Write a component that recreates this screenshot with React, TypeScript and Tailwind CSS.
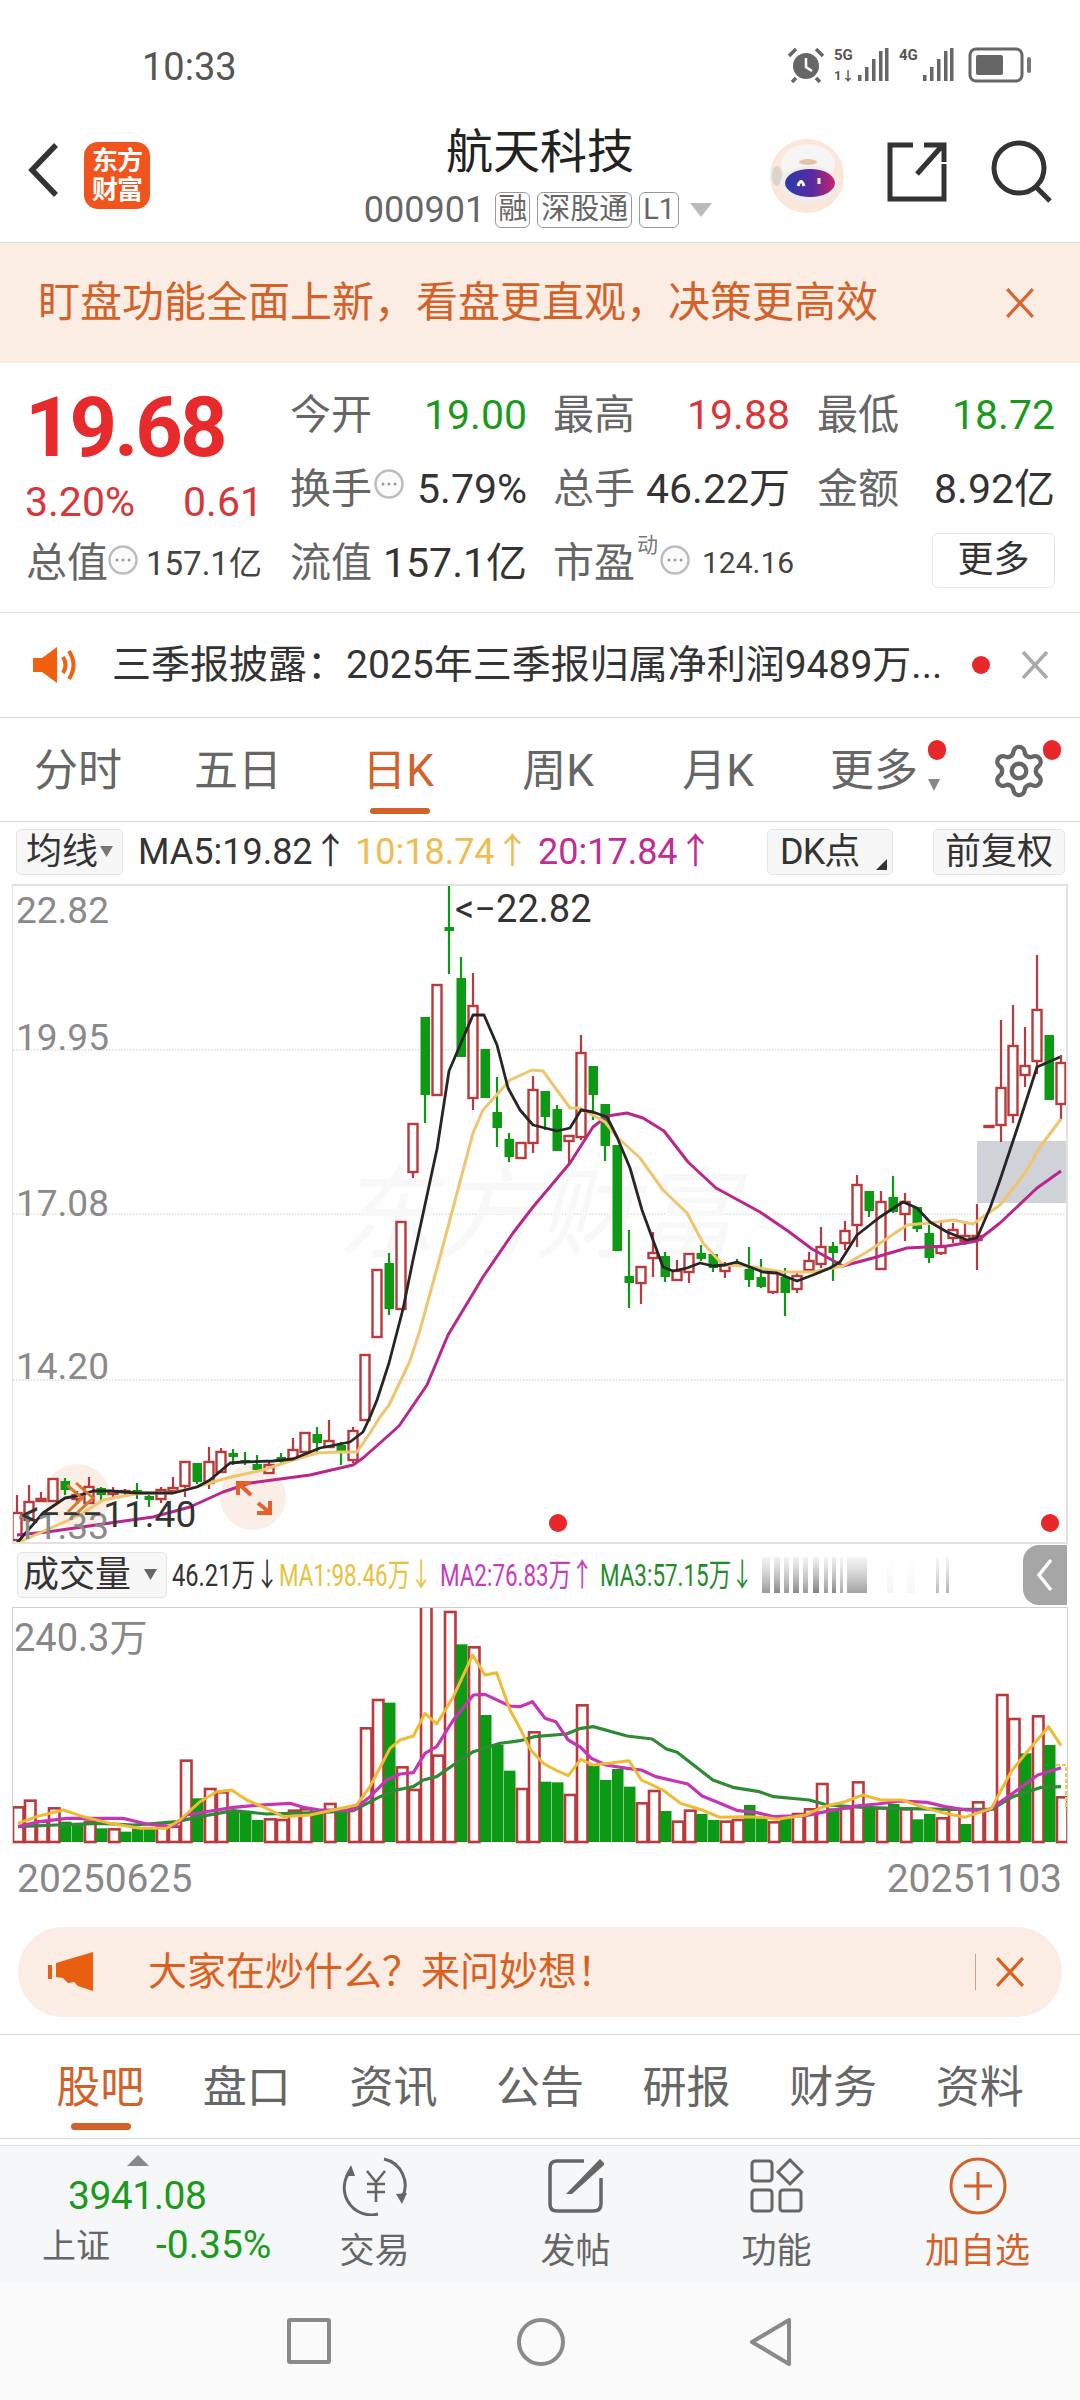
import { Settings } from "lucide-react";

// top, bottom, high, low, r = up / g = down. page pixel coords, x = 17 + 12 * index
const candles: [number, number, number, number, string][] = [
  [1513, 1540, 1495, 1540, "r"], [1502, 1520, 1485, 1522, "r"], [1499, 1501, 1492, 1502, "r"], [1479, 1501, 1479, 1501, "r"],
  [1481, 1490, 1478, 1495, "g"], [1495, 1499, 1491, 1503, "r"], [1487, 1503, 1477, 1503, "r"], [1488, 1495, 1487, 1502, "g"],
  [1491, 1494, 1487, 1498, "r"], [1491, 1492, 1489, 1495, "r"], [1490, 1494, 1483, 1499, "g"], [1496, 1500, 1495, 1507, "g"],
  [1490, 1499, 1487, 1503, "r"], [1488, 1491, 1477, 1492, "r"], [1462, 1486, 1462, 1497, "r"], [1463, 1482, 1463, 1484, "g"],
  [1462, 1483, 1447, 1489, "r"], [1452, 1472, 1448, 1472, "r"], [1453, 1457, 1449, 1465, "g"], [1460, 1461, 1452, 1465, "g"],
  [1464, 1470, 1455, 1470, "g"], [1465, 1473, 1460, 1473, "r"], [1457, 1462, 1453, 1463, "g"], [1450, 1459, 1438, 1460, "r"],
  [1433, 1452, 1433, 1452, "r"], [1434, 1443, 1427, 1453, "g"], [1441, 1447, 1420, 1448, "r"], [1445, 1452, 1442, 1465, "g"],
  [1431, 1460, 1427, 1463, "r"], [1355, 1420, 1355, 1420, "r"], [1270, 1337, 1270, 1337, "r"], [1263, 1309, 1253, 1315, "g"],
  [1222, 1309, 1222, 1309, "r"], [1124, 1172, 1124, 1178, "r"], [1017, 1095, 1017, 1123, "g"], [985, 1095, 985, 1095, "r"],
  [927, 931, 885, 974, "g"], [978, 1057, 957, 1057, "g"], [1006, 1098, 973, 1110, "r"], [1049, 1098, 1049, 1098, "g"],
  [1112, 1128, 1077, 1147, "g"], [1139, 1157, 1133, 1162, "g"], [1143, 1158, 1143, 1158, "r"], [1090, 1143, 1076, 1153, "r"],
  [1091, 1117, 1091, 1130, "g"], [1109, 1151, 1105, 1151, "g"], [1136, 1141, 1136, 1163, "r"], [1053, 1137, 1035, 1140, "r"],
  [1066, 1095, 1066, 1120, "g"], [1104, 1146, 1104, 1161, "g"], [1145, 1251, 1145, 1251, "g"], [1276, 1283, 1230, 1308, "g"],
  [1267, 1283, 1267, 1304, "r"], [1253, 1258, 1232, 1277, "r"], [1256, 1277, 1252, 1282, "g"], [1271, 1280, 1260, 1280, "r"],
  [1254, 1272, 1254, 1283, "r"], [1253, 1259, 1245, 1261, "g"], [1254, 1268, 1254, 1272, "g"], [1265, 1271, 1262, 1278, "r"],
  [1263, 1264, 1259, 1265, "g"], [1269, 1280, 1247, 1287, "g"], [1277, 1287, 1259, 1288, "g"], [1273, 1292, 1273, 1294, "r"],
  [1277, 1293, 1268, 1316, "g"], [1276, 1289, 1273, 1293, "r"], [1261, 1270, 1252, 1273, "r"], [1247, 1264, 1227, 1268, "r"],
  [1246, 1253, 1242, 1281, "g"], [1231, 1243, 1221, 1250, "r"], [1185, 1225, 1175, 1247, "r"], [1191, 1211, 1191, 1217, "g"],
  [1202, 1269, 1191, 1269, "r"], [1197, 1212, 1176, 1213, "g"], [1202, 1214, 1193, 1241, "r"], [1207, 1229, 1207, 1232, "g"],
  [1233, 1258, 1225, 1263, "g"], [1247, 1253, 1220, 1255, "r"], [1230, 1238, 1223, 1243, "r"], [1236, 1241, 1223, 1245, "r"],
  [1236, 1240, 1204, 1270, "r"], [1126, 1126, 1126, 1126, "r"], [1088, 1125, 1020, 1142, "r"], [1046, 1115, 1005, 1123, "r"],
  [1066, 1075, 1027, 1087, "r"], [1010, 1061, 955, 1074, "r"], [1035, 1100, 1035, 1100, "g"], [1063, 1104, 1055, 1119, "r"],
];

const ma5 = "17,1543 43,1513 65,1498 77,1496 93,1491 110,1491 137,1493 173,1493 197,1487 210,1480 230,1463 243,1462 273,1461 293,1459 320,1448 350,1442 363,1432 370,1417 377,1400 389,1363 403,1309 413,1260 423,1214 437,1149 449,1071 473,1015 484,1015 497,1045 508,1088 520,1110 533,1125 557,1131 570,1128 581,1110 593,1112 607,1117 617,1137 630,1168 642,1210 653,1240 663,1267 673,1271 687,1268 700,1263 713,1266 725,1265 737,1262 750,1267 763,1272 777,1273 797,1281 813,1275 830,1268 840,1262 857,1235 880,1217 903,1202 917,1208 930,1222 947,1232 967,1240 977,1238 990,1208 1000,1180 1020,1120 1037,1067 1060,1057";
const ma10 = "17,1543 53,1527 80,1515 103,1500 140,1493 173,1493 203,1485 227,1478 263,1470 293,1460 317,1453 340,1452 357,1452 370,1433 380,1417 389,1405 410,1361 420,1330 440,1257 473,1133 483,1110 510,1080 532,1070 543,1071 570,1108 580,1108 605,1122 617,1137 640,1158 663,1190 687,1213 703,1243 723,1265 747,1266 783,1272 813,1272 843,1266 870,1250 907,1225 930,1223 953,1220 973,1224 1000,1205 1025,1173 1040,1147 1061,1119";
const ma20 = "17,1535 47,1532 110,1523 153,1517 190,1507 223,1492 250,1483 310,1475 353,1465 363,1458 380,1443 399,1426 427,1385 448,1335 483,1277 513,1233 533,1207 570,1163 593,1127 607,1116 627,1113 643,1118 664,1131 688,1162 716,1188 760,1212 788,1231 812,1249 843,1266 873,1258 907,1248 927,1247 947,1246 977,1241 1000,1223 1037,1188 1061,1171";

const volTops = [622, 602, 665, 625, 665, 670, 665, 685, 688, 695, 685, 685, 680, 680, 482, 595, 567, 577, 630, 638, 660, 658, 660, 632, 628, 632, 612, 635, 625, 385, 300, 308, 502, 570, 0, 467, 36, 133, 142, 345, 435, 512, 567, 397, 545, 547, 585, 316, 497, 540, 507, 560, 610, 573, 633, 665, 632, 642, 660, 665, 660, 615, 655, 667, 655, 642, 628, 552, 625, 625, 547, 625, 625, 612, 628, 658, 642, 655, 628, 672, 607, 628, 285, 357, 460, 349, 435, 592];
const volColors = "rrrrggrgrgggrrrgrrgggrrrrgrgrrrgrrrrrgrgggrrggrrggggrrgrrggrrggrgrrrgrrgrgrggrrgrrrrgrgr";

// crop coords: left half is 3x, right half is 2.8x
const volLine = (left: number[][], right: number[][]) =>
  [...left.map(([x, y]) => [x / 3, 1600 + y / 3]), ...right.map(([x, y]) => [520 + x / 2.8, 1600 + y / 3])]
    .map((p) => p.join(","))
    .join(" ");

const vol1 = volLine(
  [[54, 670], [110, 650], [190, 630], [250, 650], [330, 670], [420, 685], [500, 685], [540, 660], [600, 605], [650, 575], [695, 570], [740, 600], [800, 625], [850, 650], [930, 645], [1000, 630], [1070, 615], [1110, 560], [1170, 445], [1200, 420], [1240, 408], [1275, 340], [1310, 372], [1360, 290], [1418, 165], [1455, 225], [1490, 218], [1530, 330]],
  [[0, 385], [30, 450], [65, 490], [100, 510], [135, 527], [170, 478], [205, 495], [250, 490], [305, 482], [340, 540], [400, 570], [450, 610], [510, 630], [560, 652], [620, 650], [680, 652], [720, 658], [800, 645], [850, 620], [910, 605], [960, 585], [1010, 600], [1070, 600], [1130, 622], [1190, 640], [1245, 652], [1320, 625], [1375, 515], [1420, 455], [1480, 380], [1515, 437]]
);
const vol2 = volLine(
  [[54, 680], [120, 665], [200, 655], [370, 655], [440, 672], [520, 680], [560, 645], [650, 630], [700, 622], [780, 615], [870, 610], [910, 622], [960, 630], [1060, 630], [1110, 590], [1160, 540], [1200, 522], [1240, 518], [1275, 460], [1310, 440], [1360, 360], [1420, 285], [1455, 283], [1530, 318]],
  [[0, 320], [35, 305], [70, 355], [100, 365], [135, 420], [170, 442], [200, 475], [240, 495], [300, 505], [340, 510], [380, 530], [470, 552], [510, 588], [560, 610], [610, 632], [660, 637], [710, 650], [800, 647], [870, 632], [940, 618], [1000, 612], [1070, 603], [1140, 607], [1190, 620], [1250, 630], [1310, 632], [1380, 580], [1450, 525], [1515, 503]]
);
const vol3 = volLine(
  [[54, 680], [170, 675], [300, 670], [400, 675], [470, 670], [530, 665], [600, 650], [700, 632], [800, 642], [950, 638], [1060, 632], [1140, 590], [1190, 570], [1240, 560], [1270, 540], [1310, 530], [1360, 495], [1420, 455], [1500, 430]],
  [[0, 422], [40, 410], [130, 402], [170, 385], [205, 380], [300, 408], [370, 417], [410, 447], [440, 457], [540, 540], [600, 563], [670, 575], [710, 590], [810, 600], [860, 615], [960, 622], [1050, 625], [1200, 628], [1320, 628], [1380, 590], [1460, 562], [1515, 560]]
);

const axis = [
  { label: "22.82", y: 923 },
  { label: "19.95", y: 1050 },
  { label: "17.08", y: 1216 },
  { label: "14.20", y: 1379 },
];

const blurBars = [
  [763, 8, 0.6], [775, 6, 0.7], [785, 5, 0.6], [794, 6, 0.7], [804, 5, 0.6], [814, 6, 0.75], [825, 4, 0.6], [833, 4, 0.7], [841, 3, 0.5],
  [848, 20, 0.55], [888, 6, 0.06], [908, 8, 0.05], [937, 3, 0.4], [947, 3, 0.45],
];

const Dots = () => (
  <svg width="30" height="30" viewBox="0 0 30 30" className="shrink-0">
    <circle cx="15" cy="15" r="13.5" fill="#fbfbfb" stroke="#bdbdbd" strokeWidth="2.5" />
    <circle cx="9" cy="15" r="1.5" fill="#999" />
    <circle cx="15" cy="15" r="1.5" fill="#999" />
    <circle cx="21" cy="15" r="1.5" fill="#999" />
  </svg>
);

const CloseX = ({ color, size, width = 3 }: { color: string; size: number; width?: number }) => (
  <svg width={size} height={size} viewBox="0 0 30 30" className="shrink-0">
    <path d="M3 2 L27 28 M27 2 L3 28" stroke={color} strokeWidth={width} fill="none" />
  </svg>
);

const Signal = ({ label, extra }: { label: string; extra?: string }) => (
  <svg width="56" height="36" viewBox="0 0 56 36">
    <text x="0" y="13" className="text-[15px] font-bold" fill="#555">{label}</text>
    {extra && <text x="0" y="33" className="text-[13px] font-bold" fill="#555">{extra}</text>}
    <rect x="24" y="28" width="3.5" height="6" fill="#666" />
    <rect x="31" y="20" width="3.5" height="14" fill="#666" />
    <rect x="38" y="12" width="3.5" height="22" fill="#666" />
    <rect x="45" y="4" width="3.5" height="30" fill="#666" />
    <rect x="51" y="1" width="3.5" height="33" fill="#666" />
  </svg>
);

const StatusBar = () => (
  <div className="h-[110px] flex items-start pt-[47px] pl-[142px] pr-[48px] justify-between">
    <span className="text-[38px] leading-[40px] text-[#555]">10:33</span>
    <div className="flex items-center gap-[9px] -mt-[1px] h-[38px]">
      <svg width="38" height="36" viewBox="0 0 38 36">
        <circle cx="19" cy="19" r="13" fill="#666" />
        <path d="M19 11 V20 L25 24" stroke="#fff" strokeWidth="2.5" fill="none" />
        <path d="M2 9 L9 2 M36 9 L29 2 M9 31 L5 35 M29 31 L33 35" stroke="#666" strokeWidth="3.5" />
      </svg>
      <Signal label="5G" extra="1↓" />
      <Signal label="4G" />
      <svg width="64" height="36" viewBox="0 0 64 36" className="ml-[4px]">
        <rect x="2" y="2" width="52" height="32" rx="6" fill="none" stroke="#666" strokeWidth="3" />
        <rect x="8" y="8" width="27" height="20" rx="2" fill="#666" />
        <rect x="59" y="10" width="4" height="16" rx="2" fill="#777" />
      </svg>
    </div>
  </div>
);

const Header = () => (
  <div className="relative h-[133px] border-b border-[#d9d9d9] flex">
    <div className="flex items-start pl-[26px] pt-[32px] gap-[22px]">
      <svg width="36" height="56" viewBox="0 0 36 56">
        <path d="M30 3 L6 28 L30 53" fill="none" stroke="#333" strokeWidth="5.5" />
      </svg>
      <div className="w-[66px] h-[67px] bg-[#f1541c] rounded-[14px] text-white text-[26px] leading-[29px] font-bold flex flex-col items-center justify-center tracking-[-1px]">
        <span>东方</span>
        <span>财富</span>
      </div>
    </div>
    <div className="absolute left-0 right-0 top-0 flex flex-col items-center">
      <div className="text-[47px] leading-[60px] mt-[12px] text-[#222]">航天科技</div>
      <div className="flex items-center h-[38px] mt-[9px] ml-[-3px] gap-[7px] text-[#666]">
        <span className="text-[36px] leading-none mr-[3px] tracking-[0px]">000901</span>
        <span className="border border-[#999] rounded-[6px] h-[36px] w-[35px] text-[29px] leading-[32px] text-center">融</span>
        <span className="border border-[#999] rounded-[6px] h-[36px] w-[95px] text-[29px] leading-[32px] text-center">深股通</span>
        <span className="border border-[#999] rounded-[6px] h-[36px] w-[40px] text-[29px] leading-[32px] text-center">L1</span>
        <svg width="24" height="16" viewBox="0 0 24 16" className="ml-[3px]">
          <path d="M1 1 H23 L12 15 Z" fill="#bbb" />
        </svg>
      </div>
    </div>
    <div className="ml-auto flex items-start pt-[28px] pr-[26px]">
      <svg width="76" height="76" viewBox="0 0 76 76" className="mr-[42px]">
        <defs>
          <linearGradient id="visor" x1="0" y1="0" x2="1" y2="0">
            <stop offset="0" stopColor="#2b3aa8" />
            <stop offset="0.55" stopColor="#5a2aa0" />
            <stop offset="1" stopColor="#c8256a" />
          </linearGradient>
        </defs>
        <circle cx="38" cy="38" r="37" fill="#fbe6da" />
        <ellipse cx="8" cy="38" rx="5" ry="10" fill="#d9d4d0" />
        <ellipse cx="39" cy="26" rx="27" ry="20" fill="#f6f5f3" />
        <ellipse cx="39" cy="24" rx="9" ry="3" fill="#e6c3a8" />
        <ellipse cx="40" cy="46" rx="29" ry="18" fill="#efedeb" />
        <ellipse cx="41" cy="45" rx="25" ry="14" fill="url(#visor)" />
        <path d="M29 48 Q32 39 35 48 M50 46 V40" stroke="#fff" strokeWidth="3" fill="none" />
      </svg>
      <svg width="60" height="60" viewBox="0 0 60 60" className="mt-[4px] mr-[43px]">
        <path d="M26 3 H3 V57 H57 V22 M30 32 L55 4 M37 3 H57 V20" fill="none" stroke="#333" strokeWidth="5" />
      </svg>
      <svg width="64" height="64" viewBox="0 0 64 64" className="mt-[2px]">
        <circle cx="29" cy="28" r="25" fill="none" stroke="#333" strokeWidth="5" />
        <path d="M46 47 L60 61" stroke="#333" strokeWidth="5" />
      </svg>
    </div>
  </div>
);

const Banner = () => (
  <div className="h-[120px] bg-[#fcede4] flex items-center justify-between pl-[38px] pr-[44px] text-[#d2622a]">
    <span className="text-[42px] leading-none whitespace-nowrap">盯盘功能全面上新，看盘更直观，决策更高效</span>
    <CloseX color="#d9662c" size={32} />
  </div>
);

const Label = ({ children }: { children: string }) => <span className="text-[41px] leading-none text-[#666] w-[82px] shrink-0 whitespace-nowrap">{children}</span>;

const Quote = () => (
  <div className="h-[250px] border-b border-[#dedede] pt-[15px] pl-[28px] grid grid-cols-[262px_263px_264px_238px] grid-rows-[74px_74px_74px]">
    <div className="row-span-2 flex flex-col">
      <div className="text-[83px] leading-[70px] font-bold text-[#e72a2b] tracking-[-3px] mt-[15px] -ml-[3px]">19.68</div>
      <div className="flex justify-between w-[238px] -ml-[3px] mt-[19px] text-[41px] leading-[40px] text-[#d8363a]">
        <span>3.20%</span>
        <span>0.61</span>
      </div>
    </div>
    <div className="flex items-center">
      <Label>今开</Label>
      <span className="ml-auto mr-[26px] text-[41px] leading-none text-[#1a9a1a]">19.00</span>
    </div>
    <div className="flex items-center">
      <Label>最高</Label>
      <span className="ml-auto mr-[27px] text-[41px] leading-none text-[#d8363a]">19.88</span>
    </div>
    <div className="flex items-center">
      <Label>最低</Label>
      <span className="ml-auto text-[41px] leading-none text-[#1a9a1a]">18.72</span>
    </div>

    <div className="flex items-center">
      <Label>换手</Label>
      <span className="-mt-[10px] ml-[2px]"><Dots /></span>
      <span className="ml-auto mr-[26px] text-[41px] leading-none text-[#333]">5.79%</span>
    </div>
    <div className="flex items-center">
      <Label>总手</Label>
      <span className="ml-auto mr-[27px] text-[41px] leading-none text-[#333]">46.22万</span>
    </div>
    <div className="flex items-center">
      <Label>金额</Label>
      <span className="ml-auto text-[41px] leading-none text-[#333]">8.92亿</span>
    </div>

    <div className="flex items-center -ml-[2px]">
      <Label>总值</Label>
      <span className="-mt-[6px]"><Dots /></span>
      <span className="ml-[8px] text-[33px] leading-none text-[#444] whitespace-nowrap">157.1亿</span>
    </div>
    <div className="flex items-center">
      <Label>流值</Label>
      <span className="ml-auto mr-[26px] text-[41px] leading-none text-[#333] whitespace-nowrap">157.1亿</span>
    </div>
    <div className="flex items-center">
      <Label>市盈</Label>
      <span className="text-[21px] leading-none text-[#777] -mt-[36px] ml-[2px]">动</span>
      <span className="-mt-[6px] ml-[2px]"><Dots /></span>
      <span className="ml-[12px] text-[30px] leading-none text-[#444]">124.16</span>
    </div>
    <div className="flex items-center justify-end">
      <span className="w-[123px] h-[55px] -mt-[6px] border border-[#e6e6e6] rounded-[6px] text-[36px] leading-[52px] text-center text-[#333]">更多</span>
    </div>
  </div>
);

const Notice = () => (
  <div className="h-[105px] border-b border-[#dedede] flex items-center pl-[33px] pr-[30px]">
    <svg width="46" height="38" viewBox="0 0 46 38" className="shrink-0">
      <path d="M0 12 H9 L24 1 V37 L9 26 H0 Z" fill="#f0600f" />
      <path d="M30 11 Q35 19 30 27 M36 5 Q45 19 36 33" fill="none" stroke="#f0600f" strokeWidth="4" />
    </svg>
    <span className="ml-[33px] text-[39px] leading-none text-[#333] whitespace-nowrap">三季报披露：2025年三季报归属净利润9489万...</span>
    <span className="ml-auto w-[18px] h-[18px] rounded-full bg-[#e8272a]" />
    <span className="ml-[30px]"><CloseX color="#aaa" size={30} width={3.5} /></span>
  </div>
);

const ChartTabs = () => (
  <div className="h-[104px] border-b border-[#dedede] flex -ml-[2px] text-[44px] leading-none text-[#666] pt-[2px]">
    <span className="w-[160px] flex items-center justify-center">分时</span>
    <span className="w-[160px] flex items-center justify-center">五日</span>
    <span className="relative w-[160px] flex items-center justify-center text-[#d2622a]">
      日K
      <span className="absolute left-[52px] bottom-[7px] w-[60px] h-[6px] rounded-full bg-[#d2622a]" />
    </span>
    <span className="w-[160px] flex items-center justify-center">周K</span>
    <span className="w-[160px] flex items-center justify-center">月K</span>
    <span className="relative w-[160px] flex items-center justify-center -ml-[4px]">
      更多
      <svg width="14" height="14" viewBox="0 0 14 14" className="absolute left-[133px] top-[58px]">
        <path d="M1 1 H13 L7 13 Z" fill="#888" />
      </svg>
      <span className="absolute left-[134px] top-[20px] w-[18px] h-[20px] rounded-full bg-[#e8272a]" />
    </span>
    <span className="relative w-[120px] flex items-center justify-start pl-[36px]">
      <Settings size={58} strokeWidth={1.8} color="#666" />
      <span className="absolute left-[89px] top-[20px] w-[18px] h-[20px] rounded-full bg-[#e8272a]" />
    </span>
  </div>
);

const MaRow = () => (
  <div className="h-[62px] flex items-center pl-[16px] text-[36px] leading-none pb-[2px]">
    <span className="relative w-[107px] h-[46px] bg-[#f7f7f7] border border-[#e4e4e4] rounded-[5px] pl-[9px] flex items-center text-[#333]">
      均线
      <svg width="13" height="13" viewBox="0 0 13 13" className="absolute right-[9px] top-[15px]">
        <path d="M0 1 H13 L6.5 12 Z" fill="#777" />
      </svg>
    </span>
    <span className="ml-[15px] w-[217px] text-[#333] whitespace-nowrap">MA5:19.82↑</span>
    <span className="w-[183px] text-[#f0bb52] whitespace-nowrap">10:18.74↑</span>
    <span className="w-[229px] text-[#c02c94] whitespace-nowrap">20:17.84↑</span>
    <span className="relative w-[126px] h-[46px] bg-[#f7f7f7] border border-[#e4e4e4] rounded-[5px] pl-[12px] flex items-center text-[#333] tracking-[-1px]">
      DK点
      <svg width="11" height="11" viewBox="0 0 11 11" className="absolute right-[5px] bottom-[4px]">
        <path d="M11 0 V11 H0 Z" fill="#333" />
      </svg>
    </span>
    <span className="ml-[40px] w-[132px] h-[46px] bg-[#f7f7f7] border border-[#e4e4e4] rounded-[5px] flex items-center justify-center text-[#333]">前复权</span>
  </div>
);

const PriceChart = () => (
  <div className="ml-[12px] w-[1056px] h-[660px] border border-t-2 border-r-2 border-b-2 border-[#e2e2e2] overflow-hidden">
    <svg width="1053" height="656" viewBox="13 886 1053 656" className="block">
      <rect x="977" y="1141" width="90" height="62" fill="#cfd3d8" />
      {[1050, 1214, 1380].map((y) => (
        <line key={y} x1="13" x2="1066" y1={y} y2={y} stroke="#c9c9c9" strokeDasharray="1.5 1.5" />
      ))}
      <text x="336" y="1250" className="text-[100px] italic" fill="#f8f8f8">东方财富</text>
      {axis.map((a) => (
        <text key={a.label} x="16" y={a.y} className="text-[37px]" fill="#8a8a8a">{a.label}</text>
      ))}
      <circle cx="77" cy="1497" r="33" fill="#fbeee6" />
      <circle cx="253" cy="1497" r="33" fill="#fbeee6" />
      {candles.map(([top, bot, hi, lo, c], i) => {
        const x = 17 + 12 * i;
        const color = c === "r" ? "#b9393d" : "#0c9a14";
        return (
          <g key={i}>
            <line x1={x} x2={x} y1={hi} y2={lo} stroke={color} strokeWidth="2.2" />
            {c === "r" ? (
              <rect x={x - 4.5} y={top} width="9" height={Math.max(bot - top, 1)} fill="#fff" stroke={color} strokeWidth="2.4" />
            ) : (
              <rect x={x - 4.5} y={top} width="9.5" height={Math.max(bot - top, 2)} fill={color} />
            )}
          </g>
        );
      })}
      <polyline points={ma20} fill="none" stroke="#b9278d" strokeWidth="3" strokeLinejoin="round" />
      <polyline points={ma10} fill="none" stroke="#efc56f" strokeWidth="3" strokeLinejoin="round" />
      <polyline points={ma5} fill="none" stroke="#262626" strokeWidth="2.8" strokeLinejoin="round" />
      <text x="455" y="922" className="text-[38px]" fill="#333">{"<\u221222.82"}</text>
      <text x="16" y="1539" className="text-[37px]" fill="#8a8a8a">11.33</text>
      <text x="21" y="1527" className="text-[37px]" fill="#333">{"<\u2212\u2212\u221211.40"}</text>
      <path d="M67 1485 L82 1498 L68 1512 M76 1483 L93 1498 L77 1513" fill="none" stroke="#d97a2b" strokeWidth="3" />
      <path d="M238 1495 V1483 H251 M239 1484 L251 1495 M257 1513 H270 V1501 M258 1503 L269 1512" fill="none" stroke="#e5602a" strokeWidth="4" />
      <ellipse cx="558" cy="1523" rx="9" ry="9" fill="#e8272a" />
      <ellipse cx="1050" cy="1523" rx="9" ry="9" fill="#e8272a" />
    </svg>
  </div>
);

const VolumeHeader = () => (
  <div className="relative h-[63px] flex items-center pl-[17px] pb-[2px]">
    <span className="relative w-[150px] h-[46px] bg-[#f7f7f7] border border-[#e4e4e4] rounded-[5px] pl-[5px] flex items-center text-[36px] leading-none text-[#333]">
      成交量
      <svg width="13" height="13" viewBox="0 0 13 13" className="absolute right-[9px] top-[15px]">
        <path d="M0 1 H13 L6.5 12 Z" fill="#666" />
      </svg>
    </span>
    <div className="flex text-[32px] leading-none whitespace-nowrap">
      <span className="w-[107px] ml-[5px] text-[#333] origin-left scale-x-[0.74]">46.21万↓</span>
      <span className="w-[161px] text-[#e6c23e] origin-left scale-x-[0.7]">MA1:98.46万↓</span>
      <span className="w-[160px] text-[#c63cc0] origin-left scale-x-[0.7]">MA2:76.83万↑</span>
      <span className="w-[160px] text-[#1f8c2a] origin-left scale-x-[0.7]">MA3:57.15万↓</span>
    </div>
    <svg width="210" height="40" viewBox="760 0 210 40" className="-ml-[1px]">
      <defs>
        <linearGradient id="blur" x1="0" y1="0" x2="0" y2="1">
          <stop offset="0" stopColor="#888" stopOpacity="0.15" />
          <stop offset="1" stopColor="#555" stopOpacity="1" />
        </linearGradient>
      </defs>
      {blurBars.map(([x, w, o]) => (
        <rect key={x} x={x} y="2" width={w} height="36" fill="url(#blur)" opacity={o} />
      ))}
    </svg>
    <span className="absolute right-[13px] top-[1px] w-[44px] h-[60px] rounded-l-[16px] bg-[#a6a6a6] flex items-center justify-center">
      <svg width="18" height="34" viewBox="0 0 18 34">
        <path d="M15 2 L3 17 L15 32" fill="none" stroke="#fff" strokeWidth="3.5" />
      </svg>
    </span>
  </div>
);

const VolumeChart = () => (
  <div className="ml-[12px] w-[1056px] h-[237px] border border-[#cfcfcf] border-b-0 overflow-hidden relative">
    <svg width="1054" height="236" viewBox="13 1608 1054 236" className="block">
      {volTops.map((t, i) => {
        const x = 18 + 12 * i;
        const top = 1600 + t / 3;
        if (volColors[i] === "r") {
          return <rect key={i} x={x - 5} y={top} width="10.5" height={1842 - top} fill="#fff" stroke="#b9393d" strokeWidth="2.6" />;
        }
        return <rect key={i} x={x - 6} y={top} width="11.5" height={1842 - top} fill="#0c9a14" />;
      })}
      <path d="M1056 1765 H1066 V1810" fill="none" stroke="#eac94a" strokeWidth="2" strokeDasharray="4 2" />
      <polyline points={vol3} fill="none" stroke="#2f8a35" strokeWidth="3.2" strokeLinejoin="round" />
      <polyline points={vol2} fill="none" stroke="#c535b5" strokeWidth="3.2" strokeLinejoin="round" />
      <polyline points={vol1} fill="none" stroke="#eebb33" strokeWidth="3" strokeLinejoin="round" />
      <text x="14" y="1651" className="text-[38px]" fill="#888">240.3万</text>
    </svg>
  </div>
);

const Dates = () => (
  <div className="h-[83px] flex items-center justify-between pl-[17px] pr-[18px] pb-[13px] text-[39px] leading-none text-[#888]">
    <span>20250625</span>
    <span>20251103</span>
  </div>
);

const AskPill = () => (
  <div className="h-[90px] mx-[18px] rounded-[45px] bg-[#fcede4] flex items-center pl-[30px] pr-[36px]">
    <svg width="46" height="40" viewBox="0 0 46 40" className="shrink-0">
      <rect x="0" y="13" width="4" height="14" fill="#e8600f" />
      <path d="M8 11 L45 0 V39 L30 34 L26 30 L20 31 L15 26 L8 25 Z" fill="#e8600f" />
    </svg>
    <span className="ml-[54px] text-[39px] leading-none text-[#d9601f] whitespace-nowrap">大家在炒什么？来问妙想！</span>
    <span className="ml-auto w-[1px] h-[36px] bg-[#c9a590] mr-[18px]" />
    <CloseX color="#d9601f" size={32} />
  </div>
);

const bottomTabs = ["股吧", "盘口", "资讯", "公告", "研报", "财务", "资料"];

const InfoTabs = () => (
  <div className="mt-[17px] h-[105px] border-y border-[#dedede] grid grid-cols-7 px-[27px] text-[44px] leading-none text-[#666] pt-[3px]">
    {bottomTabs.map((t, i) => (
      <span key={t} className={i === 0 ? "relative flex items-center justify-center text-[#d2622a]" : "flex items-center justify-center"}>
        {t}
        {i === 0 && <span className="absolute left-[44px] bottom-[8px] w-[60px] h-[7px] rounded-full bg-[#d2622a]" />}
      </span>
    ))}
  </div>
);

const ToolItem = ({ label, color, children }: { label: string; color: string; children: React.ReactNode }) => (
  <div className="flex flex-col items-center pt-[10px]">
    <div className="h-[60px] flex items-center">{children}</div>
    <span className={`mt-[18px] text-[35px] leading-none whitespace-nowrap ${color}`}>{label}</span>
  </div>
);

const Toolbar = () => (
  <div className="mt-[6px] h-[137px] border-t border-[#dedede] bg-[#f6f7f9] grid grid-cols-[274px_repeat(4,201px)]">
    <div className="relative pl-[42px]">
      <svg width="22" height="12" viewBox="0 0 22 12" className="absolute left-[127px] top-[8px]">
        <path d="M0 12 L11 1 L22 12 Z" fill="#888" />
      </svg>
      <div className="pt-[30px] pl-[26px] text-[39px] leading-[40px] text-[#1a9a1a] tracking-[-0.5px]">3941.08</div>
      <div className="flex items-center mt-[10px]">
        <span className="text-[34px] leading-none text-[#666]">上证</span>
        <span className="ml-[46px] text-[39px] leading-none text-[#1a9a1a]">-0.35%</span>
      </div>
    </div>
    <ToolItem label="交易" color="text-[#666]">
      <svg width="66" height="60" viewBox="0 0 66 60">
        <path d="M9 14 A27 27 0 0 0 36 58 M42 3 A27 27 0 0 1 60 42" fill="none" stroke="#666" strokeWidth="3" />
        <path d="M3 20 L9 9 L13 20 M54 38 L60 48 L65 37" fill="#666" />
        <path d="M25 15 L34 26 L43 15 M34 26 V46 M25 28 H43 M25 36 H43" fill="none" stroke="#666" strokeWidth="2.6" />
      </svg>
    </ToolItem>
    <ToolItem label="发帖" color="text-[#666]">
      <svg width="56" height="56" viewBox="0 0 56 56">
        <path d="M36 3 H9 Q2 3 2 10 V46 Q2 53 9 53 H45 Q53 53 53 46 V20" fill="none" stroke="#666" strokeWidth="3.5" />
        <path d="M52 1 L57 6 L24 36 L18 36 Z" fill="#666" />
      </svg>
    </ToolItem>
    <ToolItem label="功能" color="text-[#666]">
      <svg width="54" height="56" viewBox="0 0 54 56">
        <rect x="2" y="3" width="20" height="20" rx="3" fill="none" stroke="#666" strokeWidth="3" />
        <path d="M40 2 L52 14 L40 26 L28 14 Z" fill="none" stroke="#666" strokeWidth="3" />
        <rect x="2" y="32" width="20" height="21" rx="3" fill="none" stroke="#666" strokeWidth="3" />
        <rect x="30" y="32" width="21" height="21" rx="3" fill="none" stroke="#666" strokeWidth="3" />
      </svg>
    </ToolItem>
    <ToolItem label="加自选" color="text-[#d2622a]">
      <svg width="58" height="58" viewBox="0 0 58 58">
        <circle cx="29" cy="29" r="27" fill="none" stroke="#d2622a" strokeWidth="3" />
        <path d="M15 29 H43 M29 15 V43" stroke="#d2622a" strokeWidth="3" />
      </svg>
    </ToolItem>
  </div>
);

const NavBar = () => (
  <div className="h-[120px] bg-[#fafafa] flex items-start pt-[36px] pl-[287px]">
    <span className="w-[44px] h-[46px] border-[4px] border-[#8a8a8a] rounded-[3px]" />
    <span className="ml-[186px] w-[48px] h-[48px] border-[4px] border-[#8a8a8a] rounded-full" />
    <svg width="44" height="50" viewBox="0 0 44 50" className="ml-[184px] -mt-[1px]">
      <path d="M40 3 V47 L3 25 Z" fill="none" stroke="#8a8a8a" strokeWidth="4" strokeLinejoin="round" />
    </svg>
  </div>
);

const App = () => {
  return (
    <div className="w-[1080px] h-[2400px] overflow-hidden bg-white font-['Roboto','Noto_Sans_CJK_SC',sans-serif]">
      <StatusBar />
      <Header />
      <Banner />
      <Quote />
      <Notice />
      <ChartTabs />
      <MaRow />
      <PriceChart />
      <VolumeHeader />
      <VolumeChart />
      <Dates />
      <AskPill />
      <InfoTabs />
      <Toolbar />
      <NavBar />
    </div>
  );
};

export default App;
